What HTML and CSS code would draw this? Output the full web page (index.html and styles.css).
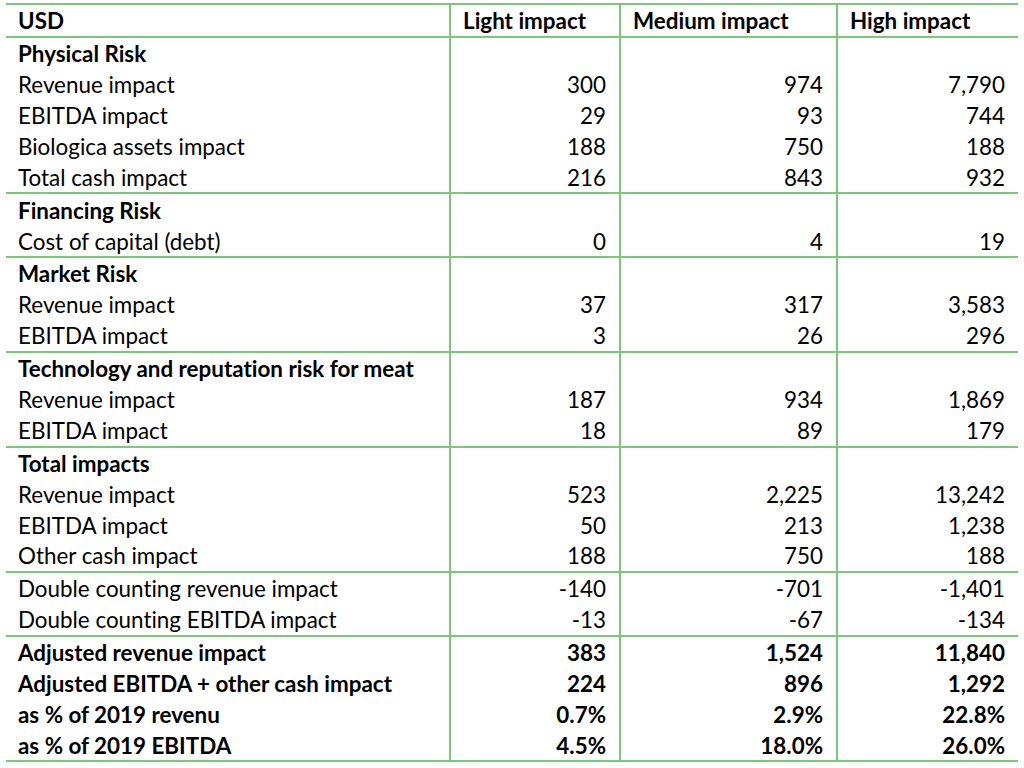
FILE: index.html
```html
<!DOCTYPE html>
<html>
<head>
<meta charset="utf-8">
<link rel="stylesheet" href="styles.css">
</head>
<body>
<div class="impact">
  <div class="sec head">
    <div class="row"><div class="cell">USD</div><div class="cell h">Light impact</div><div class="cell h">Medium impact</div><div class="cell h">High impact</div></div>
  </div>
  <div class="sec">
    <div class="row b"><div class="cell">Physical Risk</div><div class="cell"></div><div class="cell"></div><div class="cell"></div></div>
    <div class="row"><div class="cell">Revenue impact</div><div class="cell">300</div><div class="cell">974</div><div class="cell">7,790</div></div>
    <div class="row"><div class="cell">EBITDA impact</div><div class="cell">29</div><div class="cell">93</div><div class="cell">744</div></div>
    <div class="row"><div class="cell">Biologica assets impact</div><div class="cell">188</div><div class="cell">750</div><div class="cell">188</div></div>
    <div class="row"><div class="cell">Total cash impact</div><div class="cell">216</div><div class="cell">843</div><div class="cell">932</div></div>
  </div>
  <div class="sec">
    <div class="row b"><div class="cell">Financing Risk</div><div class="cell"></div><div class="cell"></div><div class="cell"></div></div>
    <div class="row"><div class="cell">Cost of capital (debt)</div><div class="cell">0</div><div class="cell">4</div><div class="cell">19</div></div>
  </div>
  <div class="sec">
    <div class="row b"><div class="cell">Market Risk</div><div class="cell"></div><div class="cell"></div><div class="cell"></div></div>
    <div class="row"><div class="cell">Revenue impact</div><div class="cell">37</div><div class="cell">317</div><div class="cell">3,583</div></div>
    <div class="row"><div class="cell">EBITDA impact</div><div class="cell">3</div><div class="cell">26</div><div class="cell">296</div></div>
  </div>
  <div class="sec">
    <div class="row b"><div class="cell">Technology and reputation risk for meat</div><div class="cell"></div><div class="cell"></div><div class="cell"></div></div>
    <div class="row"><div class="cell">Revenue impact</div><div class="cell">187</div><div class="cell">934</div><div class="cell">1,869</div></div>
    <div class="row"><div class="cell">EBITDA impact</div><div class="cell">18</div><div class="cell">89</div><div class="cell">179</div></div>
  </div>
  <div class="sec">
    <div class="row b"><div class="cell">Total impacts</div><div class="cell"></div><div class="cell"></div><div class="cell"></div></div>
    <div class="row"><div class="cell">Revenue impact</div><div class="cell">523</div><div class="cell">2,225</div><div class="cell">13,242</div></div>
    <div class="row"><div class="cell">EBITDA impact</div><div class="cell">50</div><div class="cell">213</div><div class="cell">1,238</div></div>
    <div class="row"><div class="cell">Other cash impact</div><div class="cell">188</div><div class="cell">750</div><div class="cell">188</div></div>
  </div>
  <div class="sec">
    <div class="row"><div class="cell">Double counting revenue impact</div><div class="cell">-140</div><div class="cell">-701</div><div class="cell">-1,401</div></div>
    <div class="row"><div class="cell">Double counting EBITDA impact</div><div class="cell">-13</div><div class="cell">-67</div><div class="cell">-134</div></div>
  </div>
  <div class="sec">
    <div class="row b"><div class="cell">Adjusted revenue impact</div><div class="cell">383</div><div class="cell">1,524</div><div class="cell">11,840</div></div>
    <div class="row b"><div class="cell">Adjusted EBITDA + other cash impact</div><div class="cell">224</div><div class="cell">896</div><div class="cell">1,292</div></div>
    <div class="row b"><div class="cell">as % of 2019 revenu</div><div class="cell">0.7%</div><div class="cell">2.9%</div><div class="cell">22.8%</div></div>
    <div class="row b"><div class="cell">as % of 2019 EBITDA</div><div class="cell">4.5%</div><div class="cell">18.0%</div><div class="cell">26.0%</div></div>
  </div>
</div>
</body>
</html>
```

FILE: styles.css
```css
html, body {
  margin: 0;
  padding: 0;
  background: #ffffff;
}
body {
  padding: 3px 6px 0 6px;
  font-family: Lato, "Open Sans", "Liberation Sans", sans-serif;
  font-size: 22.4px;
  color: #000;
  font-variant-ligatures: none;
}
.impact {
  width: 1012px;
}
.sec {
  border-bottom: 2px solid #7cc77c;
}
.sec.head {
  border-top: 2px solid #7cc77c;
}
.row {
  display: grid;
  grid-template-columns: 443px 170px 217px 182px;
  height: 30.9px;
}
.head .row {
  height: 31px;
  font-weight: 700;
}
.row.b {
  font-weight: 700;
}
.cell {
  display: flex;
  align-items: center;
  justify-content: flex-end;
  padding: 2px 13px 0 12px;
  white-space: nowrap;
  line-height: 1;
}
.cell:first-child {
  justify-content: flex-start;
}
.cell + .cell {
  border-left: 2px solid #7cc77c;
}
.cell.h {
  justify-content: flex-start;
}
```
